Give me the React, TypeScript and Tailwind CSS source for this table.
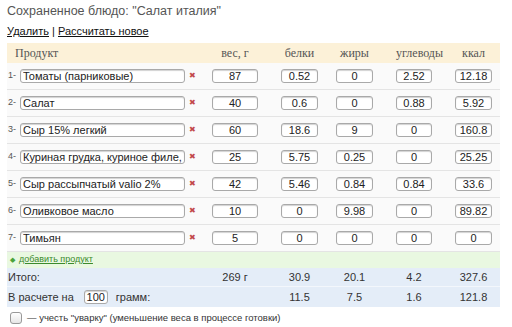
const rows = [
  { name: "Томаты (парниковые)", w: "87", p: "0.52", f: "0", c: "2.52", k: "12.18" },
  { name: "Салат", w: "40", p: "0.6", f: "0", c: "0.88", k: "5.92" },
  { name: "Сыр 15% легкий", w: "60", p: "18.6", f: "9", c: "0", k: "160.8" },
  { name: "Куриная грудка, куриное филе, без кожи", w: "25", p: "5.75", f: "0.25", c: "0", k: "25.25" },
  { name: "Сыр рассыпчатый valio 2%", w: "42", p: "5.46", f: "0.84", c: "0.84", k: "33.6" },
  { name: "Оливковое масло", w: "10", p: "0", f: "9.98", c: "0", k: "89.82" },
  { name: "Тимьян", w: "5", p: "0", f: "0", c: "0", k: "0" },
];

const grid = "grid grid-cols-[13px_165px_27px_69px_55px_60px_59px_45px] items-center";
const field =
  "block h-[14px] rounded-[3px] border border-[#a9a9a9] bg-white shadow-[inset_0_1px_1px_rgba(0,0,0,0.18)] text-[11px] leading-[12px] text-[#222] outline-none";

const Num = ({ v, w }: { v: string; w: string }) => (
  <input readOnly value={v} className={`${field} ${w} text-center`} />
);

export default function App() {
  return (
    <div className="w-[512px] h-[327px] bg-white overflow-hidden font-['Liberation_Sans',Arial,sans-serif] text-[#333]">
      <div className="pl-[7px] pt-[2px] text-[12.5px] leading-[18px] text-[#555]">
        Сохраненное блюдо: "Салат италия"
      </div>
      <div className="pl-[7px] pt-[5px] text-[11px] leading-[13px] text-[#111]">
        <span className="underline">Удалить</span> | <span className="underline">Рассчитать новое</span>
      </div>

      <div className="ml-[7px] mt-[5px] w-[493px]">
        <div className={`${grid} h-[20px] bg-[#fcf1d8] font-['Liberation_Serif',Georgia,serif] text-[12px] text-[#555]`}>
          <div className="col-span-2 pl-[8px]">Продукт</div>
          <div />
          <div className="w-[46px] text-center">вес, г</div>
          <div className="w-[37px] text-center">белки</div>
          <div className="w-[37px] text-center">жиры</div>
          <div className="w-[36px] text-center whitespace-nowrap">углеводы</div>
          <div className="w-[37px] text-center">ккал</div>
        </div>

        {rows.map((r, i) => (
          <div key={i} className={`${grid} h-[27px] bg-[#fafafa] border-b border-[#e4e4e4]`}>
            <div className="pl-[1px] text-[9px] text-[#555]">{i + 1}-</div>
            <input readOnly value={r.name} className={`${field} w-[165px] px-[2px]`} />
            <div className="pl-[4px] text-[8px] leading-[10px] text-[#c2494a]">✖</div>
            <Num v={r.w} w="w-[46px]" />
            <Num v={r.p} w="w-[37px]" />
            <Num v={r.f} w="w-[37px]" />
            <Num v={r.c} w="w-[36px]" />
            <Num v={r.k} w="w-[37px]" />
          </div>
        ))}

        <div className="flex h-[16px] items-center gap-[4px] bg-[#e9f8e1] pl-[3px] text-[9px] text-[#3b8a2c]">
          <span className="text-[7px] text-[#4aa33a]">◆</span>
          <span className="underline">добавить продукт</span>
        </div>

        <div className={`${grid} h-[19px] bg-[#e4edf8] border-b border-[#f3f7fc] text-[11px] text-[#333]`}>
          <div className="col-span-3 pl-[1px]">Итого:</div>
          <div className="w-[46px] text-center">269 г</div>
          <div className="w-[37px] text-center">30.9</div>
          <div className="w-[37px] text-center">20.1</div>
          <div className="w-[36px] text-center">4.2</div>
          <div className="w-[37px] text-center">327.6</div>
        </div>
        <div className={`${grid} h-[20px] bg-[#e4edf8] text-[11px] text-[#333]`}>
          <div className="col-span-3 flex items-center pl-[1px]">
            В расчете на
            <input readOnly value="100" className={`${field} ml-[10px] w-[24px] text-center text-[9px]`} />
            <span className="ml-[8px]">грамм:</span>
          </div>
          <div />
          <div className="w-[37px] text-center">11.5</div>
          <div className="w-[37px] text-center">7.5</div>
          <div className="w-[36px] text-center">1.6</div>
          <div className="w-[37px] text-center">121.8</div>
        </div>
      </div>

      <div className="flex items-center pl-[10px] pt-[4px] text-[9.5px] text-[#333]">
        <span className="h-[12px] w-[12px] rounded-[3px] border border-[#999] bg-gradient-to-b from-white to-[#e6e6e6]" />
        <span className="ml-[5px]">— учесть "уварку" (уменьшение веса в процессе готовки)</span>
      </div>
    </div>
  );
}
